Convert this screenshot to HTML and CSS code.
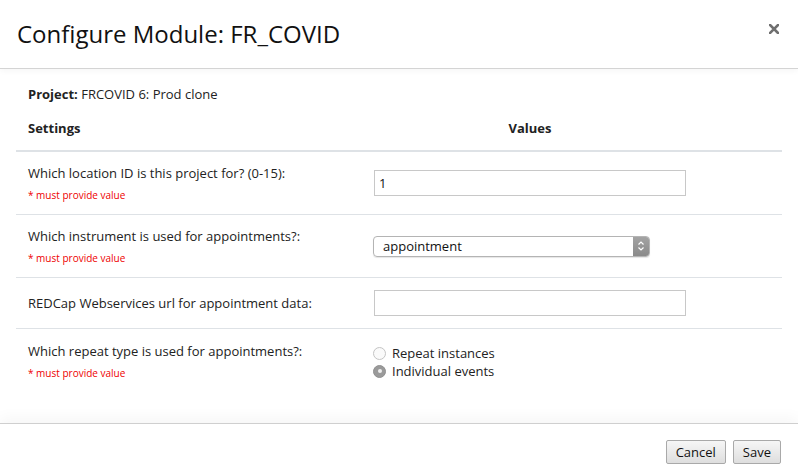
FILE: index.html
```html
<!DOCTYPE html>
<html>
<head>
<meta charset="utf-8">
<link rel="stylesheet" href="styles.css">
</head>
<body>
<div class="modal">
  <div class="modal-header">
    <h1 class="title">Configure Module: FR_COVID</h1>
    <span class="close"><svg width="10" height="10" viewBox="0 0 10 10"><path d="M1 1L9 9M9 1L1 9" stroke="#6f6f6f" stroke-width="2.6" stroke-linecap="square"/></svg></span>
  </div>
  <div class="modal-body">
    <div class="project"><b>Project:</b> FRCOVID 6: Prod clone</div>
    <div class="table">
      <div class="thead">
        <div class="th">Settings</div>
        <div class="th center">Values</div>
        <div class="th"></div>
      </div>
      <div class="row">
        <div class="cell label">
          <div>Which location ID is this project for? (0-15):</div>
          <div class="req">* must provide value</div>
        </div>
        <div class="cell"><div class="input">1</div></div>
        <div class="cell"></div>
      </div>
      <div class="row">
        <div class="cell label">
          <div>Which instrument is used for appointments?:</div>
          <div class="req">* must provide value</div>
        </div>
        <div class="cell">
          <div class="select"><span class="sel-text">appointment</span><span class="sel-arrow"><svg width="8" height="12" viewBox="0 0 8 12"><path d="M1.5 4.5L4 2L6.5 4.5M1.5 7.5L4 10L6.5 7.5" fill="none" stroke="#fff" stroke-width="1.2"/></svg></span></div>
        </div>
        <div class="cell"></div>
      </div>
      <div class="row">
        <div class="cell label">
          <div>REDCap Webservices url for appointment data:</div>
        </div>
        <div class="cell"><div class="input"></div></div>
        <div class="cell"></div>
      </div>
      <div class="row">
        <div class="cell label">
          <div>Which repeat type is used for appointments?:</div>
          <div class="req">* must provide value</div>
        </div>
        <div class="cell">
          <div class="radios">
            <label class="radio"><span class="dot"></span>Repeat instances</label>
            <label class="radio"><span class="dot checked"></span>Individual events</label>
          </div>
        </div>
        <div class="cell"></div>
      </div>
    </div>
  </div>
  <div class="modal-footer">
    <button class="btn">Cancel</button>
    <button class="btn">Save</button>
  </div>
</div>
</body>
</html>
```
FILE: styles.css
```css
* { box-sizing: border-box; }
html, body { margin: 0; padding: 0; background: #fff; }
body {
  font-family: "Open Sans", "Liberation Sans", sans-serif;
  color: #222;
  font-size: 13px;
  width: 798px;
  height: 464px;
  overflow: hidden;
}
.modal { display: flex; flex-direction: column; height: 464px; }
.modal-header {
  height: 69px;
  display: flex;
  justify-content: space-between;
  align-items: flex-start;
  padding: 17px 19px 0 17px;
  border-bottom: 1px solid #d4d4d4;
  box-shadow: 0 2px 6px rgba(0,0,0,0.04);
}
.title {
  margin: 0;
  font-size: 24px;
  font-weight: 400;
  line-height: 34px;
  color: #111;
}
.close { display: flex; padding-top: 7px; }
.modal-body { flex: 1; padding: 15px 16px 0 16px; }
.project { line-height: 20px; padding-left: 12px; color: #222; }
.project b { font-weight: 700; }
.table { display: flex; flex-direction: column; }
.thead {
  display: grid;
  grid-template-columns: 346px 336px 1fr;
  border-bottom: 2px solid #dee2e6;
}
.th {
  font-weight: 700;
  padding: 14px 12px 12px 12px;
  line-height: 20px;
  color: #222;
}
.center { text-align: center; }
.row {
  display: grid;
  grid-template-columns: 346px 336px 1fr;
  border-bottom: 1px solid #dee2e6;
  align-items: center;
}
.row:last-child { border-bottom: none; }
.cell { padding: 12px; line-height: 18px; }
.label { color: #222; }
.req { color: #e00; font-size: 10px; line-height: 14px; margin-top: 6px; }
.input {
  width: 312px;
  height: 26px;
  border: 1px solid #c8c8c8;
  padding: 0 4px;
  line-height: 24px;
  font-size: 13px;
  color: #111;
}
.select {
  width: 277px;
  height: 21px;
  margin-left: -1px;
  display: flex;
  border: 1px solid #b4b4b4;
  border-radius: 4px;
  overflow: hidden;
  box-shadow: 0 1px 1px rgba(0,0,0,0.1);
}
.sel-text { flex: 1; padding-left: 9px; line-height: 19px; color: #111; }
.sel-arrow {
  width: 16px;
  display: flex;
  align-items: center;
  justify-content: center;
  background: linear-gradient(#a3a3a3, #8a8a8a);
}
.radios { display: flex; flex-direction: column; margin-left: -1px; padding-top: 3px; }
.radio { display: flex; align-items: center; line-height: 18px; color: #222; }
.dot {
  width: 13px;
  height: 13px;
  border-radius: 50%;
  border: 1px solid #c4c4c4;
  background: #fafafa;
  margin-right: 6px;
  display: flex;
  align-items: center;
  justify-content: center;
}
.dot.checked { background: #9a9a9a; border-color: #909090; }
.dot.checked::after {
  content: "";
  width: 4px;
  height: 4px;
  border-radius: 50%;
  background: #eee;
}
.modal-footer {
  height: 41px;
  border-top: 1px solid #cfcfcf;
  box-shadow: 0 -6px 14px rgba(0,0,0,0.035);
  display: flex;
  justify-content: flex-end;
  align-items: flex-start;
  gap: 7px;
  padding: 16px 17px 0 0;
}
.btn {
  font-family: "Open Sans", "Liberation Sans", sans-serif;
  font-size: 13px;
  height: 24px;
  padding: 0 9px;
  border: 1px solid #a9a9a9;
  border-radius: 2px;
  background: linear-gradient(#f6f6f6, #dedede);
  color: #111;
  line-height: 22px;
}
```
